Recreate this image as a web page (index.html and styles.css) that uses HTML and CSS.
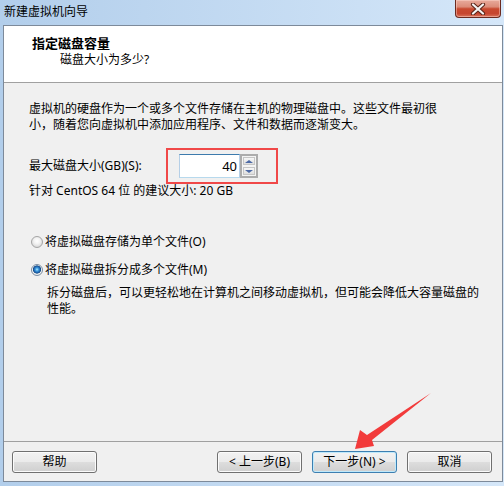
FILE: index.html
```html
<!DOCTYPE html>
<html lang="zh-CN">
<head>
<meta charset="utf-8">
<title>新建虚拟机向导</title>
<link rel="stylesheet" href="styles.css">
</head>
<body>
<div class="window">
  <div class="titlebar">
    <span class="title">新建虚拟机向导</span>
    <div class="close">
      <svg width="16" height="12" viewBox="0 0 16 12">
        <path d="M3 1.5 L13 10.5 M13 1.5 L3 10.5" stroke="#5b2418" stroke-width="4.2" stroke-linecap="round" fill="none"/>
        <path d="M3 1.5 L13 10.5 M13 1.5 L3 10.5" stroke="#f4f4f4" stroke-width="2.2" stroke-linecap="round" fill="none"/>
      </svg>
    </div>
  </div>
  <div class="panel">
    <div class="header">
      <div class="h-title">指定磁盘容量</div>
      <div class="h-sub">磁盘大小为多少?</div>
    </div>
    <div class="content">
      <p class="intro">虚拟机的硬盘作为一个或多个文件存储在主机的物理磁盘中。这些文件最初很小，随着您向虚拟机中添加应用程序、文件和数据而逐渐变大。</p>
      <div class="size-row">
        <span class="size-label">最大磁盘大小(GB)(S):</span>
        <div class="spin">
          <div class="spin-input">40</div>
          <div class="spin-btns"><span class="sb up"></span><span class="sb down"></span></div>
        </div>
      </div>
      <div class="recommend">针对 CentOS 64 位 的建议大小: 20 GB</div>
      <div class="radio-row first"><span class="radio"></span>将虚拟磁盘存储为单个文件(O)</div>
      <div class="radio-row second"><span class="radio on"></span>将虚拟磁盘拆分成多个文件(M)</div>
      <p class="desc">拆分磁盘后，可以更轻松地在计算机之间移动虚拟机，但可能会降低大容量磁盘的性能。</p>
    </div>
    <div class="footer">
      <div class="btn">帮助</div>
      <span class="spacer"></span>
      <div class="btn">&lt; 上一步(B)</div>
      <div class="btn default">下一步(N) &gt;</div>
      <div class="btn">取消</div>
    </div>
  </div>
  <svg class="arrow" width="504" height="486" viewBox="0 0 504 486">
    <polygon points="355,449 360,430 367,435 431,393 372,440 374,446" fill="#f23b3b"/>
  </svg>
</div>
</body>
</html>
```
FILE: styles.css
```css
html, body {
  margin: 0;
  padding: 0;
}
body {
  width: 504px;
  height: 486px;
  overflow: hidden;
  font-family: "Noto Sans", "Noto Sans CJK SC", sans-serif;
  font-size: 12px;
  color: #000;
  background: linear-gradient(to right, #b2ceeb, #d5e7f9);
}
.window {
  position: relative;
  display: flex;
  flex-direction: column;
  height: 486px;
}
.titlebar {
  height: 25px;
  display: flex;
  align-items: flex-start;
  flex-shrink: 0;
}
.title {
  margin-left: 4px;
  padding-top: 4px;
  line-height: 16px;
}
.close {
  margin-left: auto;
  margin-right: 3px;
  width: 46px;
  height: 18px;
  box-sizing: border-box;
  border: 1px solid #6b2a20;
  border-top: none;
  border-radius: 0 0 4px 4px;
  background: linear-gradient(#e8ab9c, #dc8c79 40%, #c8492f 52%, #c64630 80%, #d9735a);
  box-shadow: inset 0 0 0 1px rgba(255, 220, 210, 0.45);
  display: flex;
  align-items: center;
  justify-content: center;
}
.close svg {
  display: block;
}
.panel {
  flex: 1;
  margin: 0 1px 4px 3px;
  border: 1px solid #7d8a9a;
  background: #f0f0f0;
  display: flex;
  flex-direction: column;
}
.header {
  height: 57px;
  box-sizing: border-box;
  padding-top: 9px;
  background: #fff;
  border-bottom: 1px solid #a0a0a0;
  line-height: 16px;
  flex-shrink: 0;
}
.h-title {
  font-weight: bold;
  font-size: 13px;
  padding-left: 28px;
}
.h-sub {
  padding-left: 56px;
  margin-top: 1px;
}
.content {
  flex: 1;
  padding: 18px 0 0 25px;
}
.intro {
  margin: 0;
  line-height: 16px;
  width: 420px;
}
.size-row {
  display: flex;
  align-items: center;
  margin-top: 21px;
  height: 24px;
}
.size-label {
  width: 150px;
  line-height: 16px;
}
.spin {
  position: relative;
  display: flex;
  height: 24px;
}
.spin::after {
  content: "";
  position: absolute;
  left: -13px;
  right: -20px;
  top: -6px;
  bottom: -6px;
  border: 2px solid #f04848;
}
.spin-input {
  width: 61px;
  height: 24px;
  box-sizing: border-box;
  border: 1px solid;
  border-color: #3d7bad #b5cfe7 #b7d9ed #b5cfe7;
  background: #fff;
  text-align: right;
  padding-right: 2px;
  line-height: 22px;
  font-size: 13px;
}
.spin-btns {
  width: 18px;
  height: 24px;
  box-sizing: border-box;
  border: 2px solid #acacac;
  padding: 1px;
  display: flex;
  flex-direction: column;
  gap: 2px;
  background: #f4f4f4;
}
.sb {
  flex: 1;
  border: 1px solid #c6c6c6;
  background: linear-gradient(#f7f7f7, #dedede);
  display: flex;
  align-items: center;
  justify-content: center;
}
.sb::before {
  content: "";
  width: 0;
  height: 0;
  border-left: 4px solid transparent;
  border-right: 4px solid transparent;
}
.up::before {
  border-bottom: 3px solid #4d6aa6;
}
.down::before {
  border-top: 3px solid #4d6aa6;
}
.recommend {
  margin-top: 5px;
  line-height: 16px;
}
.radio-row {
  display: flex;
  align-items: center;
  line-height: 16px;
}
.first {
  margin-top: 35px;
}
.second {
  margin-top: 12px;
}
.radio {
  width: 12px;
  height: 12px;
  box-sizing: border-box;
  border-radius: 50%;
  margin-left: 2px;
  margin-right: 2px;
  border: 1px solid #a5a5a5;
  background: radial-gradient(circle at 50% 40%, #ffffff 0, #f2f2f2 3px, #d9d9d9 6px);
}
.radio.on {
  border-color: #7c8ea3;
  background: radial-gradient(circle at 50% 45%, #b6ecff 0, #3b9ae0 1.6px, #1c5ea6 3.2px, #164c86 3.8px, #f6f6f6 4.4px, #dcdcdc 6px);
}
.desc {
  margin: 7px 0 0 18px;
  line-height: 16px;
  width: 440px;
}
.footer {
  height: 40px;
  box-sizing: border-box;
  border-top: 1px solid #a0a0a0;
  padding: 9px 10px 0 8px;
  display: flex;
  align-items: flex-start;
  gap: 10px;
  flex-shrink: 0;
}
.spacer {
  flex: 1;
}
.btn {
  width: 85px;
  height: 22px;
  box-sizing: border-box;
  border: 1px solid #707070;
  border-radius: 3px;
  background: linear-gradient(#f2f2f2 0%, #ebebeb 48%, #dddddd 52%, #cfcfcf 100%);
  box-shadow: inset 0 0 0 1px #fbfbfb;
  text-align: center;
  line-height: 20px;
}
.btn.default {
  border-color: #3c7fb1;
  box-shadow: inset 0 0 0 1px #bfe9fb;
}
.arrow {
  position: absolute;
  left: 0;
  top: 0;
  pointer-events: none;
}
```
